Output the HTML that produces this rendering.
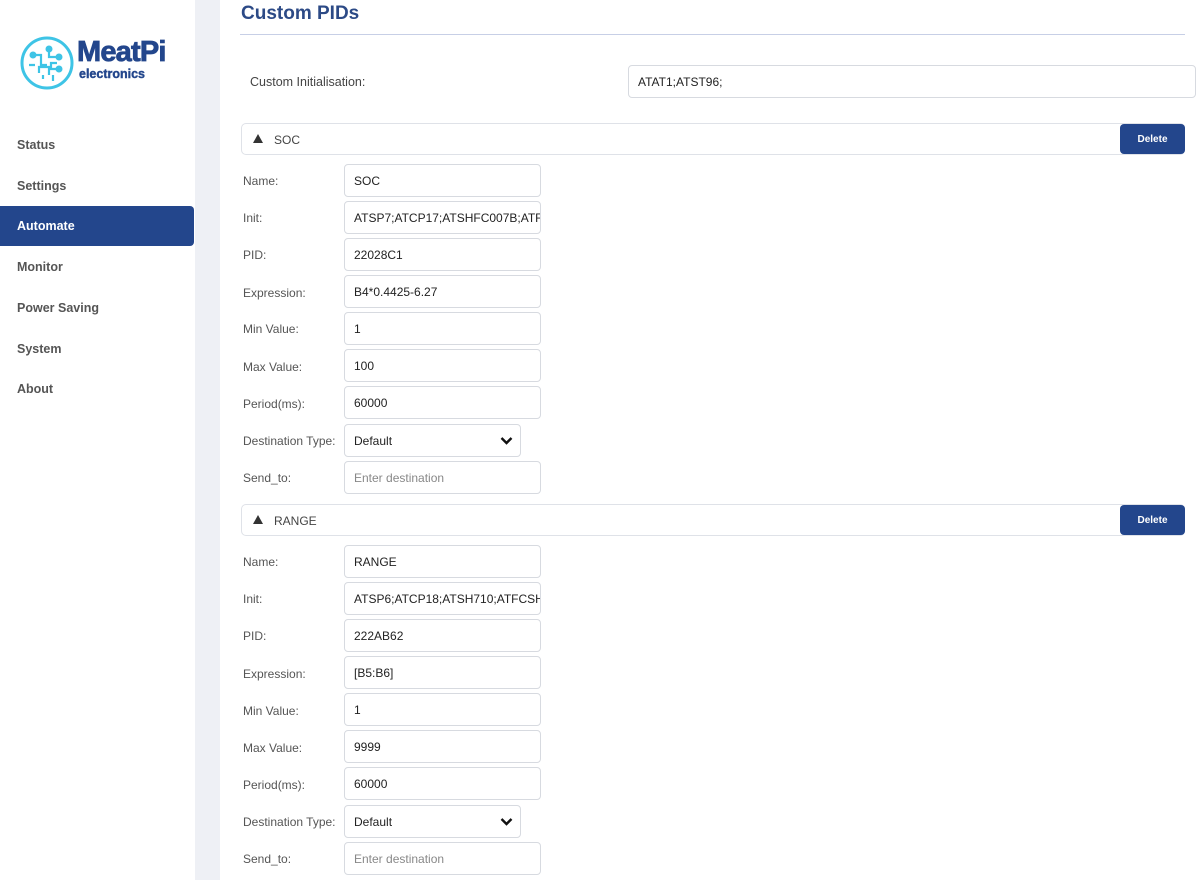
<!DOCTYPE html>
<html><head><style>
*{box-sizing:border-box;margin:0;padding:0}
body{width:1200px;height:880px;overflow:hidden;background:#fff;font-family:"Liberation Sans",sans-serif;position:relative}
.side{position:absolute;left:0;top:0;width:195px;height:880px;background:#fff}
.gap{position:absolute;left:195px;top:0;width:25px;height:880px;background:#eef0f5}
.nav{position:absolute;left:17px;font-size:12.5px;color:#555;font-weight:bold}
.act{position:absolute;left:0;top:206px;width:194px;height:40px;background:#23468c;border-radius:0 4px 4px 0;color:#fff;font-size:12.5px;font-weight:bold;padding:13px 17px}
.a{position:absolute}
h1{position:absolute;left:241px;top:3px;font-size:19px;color:#2c4a86;font-weight:bold}
.hr{position:absolute;left:240px;top:34px;width:945px;height:1px;background:#c7cfe6}
.lab{position:absolute;left:243px;font-size:12px;color:#555}
.inp{position:absolute;left:344px;width:197px;height:33px;border:1px solid #d7dae0;border-radius:4px;font-size:12px;color:#222;padding:9px 9px;white-space:nowrap;overflow:hidden}
.ph{color:#888}
.sel{width:177px}
.sel svg{position:absolute;right:7px;top:11px}
.hd{position:absolute;left:241px;width:944px;height:32px;border:1px solid #dfe2e8;border-radius:5px;font-size:12px;color:#444;padding:9px 0 0 32px}
.hd:before{content:"";position:absolute;left:11px;top:10px;border-left:5px solid transparent;border-right:5px solid transparent;border-bottom:9px solid #333}
.del{position:absolute;left:1120px;width:65px;height:30px;background:#23468c;border-radius:4px;color:#fff;font-size:10px;font-weight:bold;display:flex;align-items:center;justify-content:center}
</style></head><body>
<div class="side"></div><div class="gap"></div>
<svg class="a" style="left:19px;top:35px" width="56" height="56" viewBox="0 0 56 56" fill="none" stroke="#3ec4e6" stroke-width="3"><circle cx="28" cy="28" r="25"/><path d="M14 20h8v10h6M20 38v-6h10v8M30 14v8h10M38 28h-6v6h8M24 44v-4M10 30h6M34 46v-6" stroke-width="2.2"/><circle cx="30" cy="14" r="2" fill="#3ec4e6"/><circle cx="14" cy="20" r="2" fill="#3ec4e6"/><circle cx="40" cy="34" r="2" fill="#3ec4e6"/><circle cx="40" cy="22" r="2" fill="#3ec4e6"/></svg>
<div class="a" style="left:77px;top:36px;font-size:29px;font-weight:bold;color:#23468c;letter-spacing:-0.8px;-webkit-text-stroke:0.8px #23468c">MeatPi</div>
<div class="a" style="left:79px;top:67px;font-size:12.5px;font-weight:bold;color:#23468c;-webkit-text-stroke:0.4px #23468c">electronics</div>
<div class="nav" style="top:138px">Status</div>
<div class="nav" style="top:179px">Settings</div>
<div class="act">Automate</div>
<div class="nav" style="top:260px">Monitor</div>
<div class="nav" style="top:301px">Power Saving</div>
<div class="nav" style="top:342px">System</div>
<div class="nav" style="top:382px">About</div>

<h1>Custom PIDs</h1><div class="hr"></div>
<div class="a" style="left:250px;top:75px;font-size:12.5px;color:#444">Custom Initialisation:</div>
<div class="inp" style="left:628px;top:65px;width:568px;">ATAT1;ATST96;</div>

<div class="hd" style="top:123px">SOC</div><div class="del" style="top:124px">Delete</div>
<div class="lab" style="top:174px">Name:</div><div class="inp" style="top:164px">SOC</div>
<div class="lab" style="top:211px">Init:</div><div class="inp" style="top:201px">ATSP7;ATCP17;ATSHFC007B;ATFCSH</div>
<div class="lab" style="top:248px">PID:</div><div class="inp" style="top:238px">22028C1</div>
<div class="lab" style="top:286px">Expression:</div><div class="inp" style="top:275px">B4*0.4425-6.27</div>
<div class="lab" style="top:322px">Min Value:</div><div class="inp" style="top:312px">1</div>
<div class="lab" style="top:360px">Max Value:</div><div class="inp" style="top:349px">100</div>
<div class="lab" style="top:397px">Period(ms):</div><div class="inp" style="top:386px">60000</div>
<div class="lab" style="top:434px">Destination Type:</div><div class="inp sel" style="top:424px">Default<svg width="13" height="9" viewBox="0 0 13 9"><path d="M1.5 2l5 5 5-5" stroke="#111" stroke-width="2.4" fill="none"/></svg></div>
<div class="lab" style="top:471px">Send_to:</div><div class="inp" style="top:461px"><span class="ph">Enter destination</span></div>

<div class="hd" style="top:504px">RANGE</div><div class="del" style="top:505px">Delete</div>
<div class="lab" style="top:555px">Name:</div><div class="inp" style="top:545px">RANGE</div>
<div class="lab" style="top:592px">Init:</div><div class="inp" style="top:582px">ATSP6;ATCP18;ATSH710;ATFCSH</div>
<div class="lab" style="top:629px">PID:</div><div class="inp" style="top:619px">222AB62</div>
<div class="lab" style="top:667px">Expression:</div><div class="inp" style="top:656px">[B5:B6]</div>
<div class="lab" style="top:704px">Min Value:</div><div class="inp" style="top:693px">1</div>
<div class="lab" style="top:741px">Max Value:</div><div class="inp" style="top:730px">9999</div>
<div class="lab" style="top:778px">Period(ms):</div><div class="inp" style="top:767px">60000</div>
<div class="lab" style="top:815px">Destination Type:</div><div class="inp sel" style="top:805px">Default<svg width="13" height="9" viewBox="0 0 13 9"><path d="M1.5 2l5 5 5-5" stroke="#111" stroke-width="2.4" fill="none"/></svg></div>
<div class="lab" style="top:852px">Send_to:</div><div class="inp" style="top:842px"><span class="ph">Enter destination</span></div>
</body></html>
